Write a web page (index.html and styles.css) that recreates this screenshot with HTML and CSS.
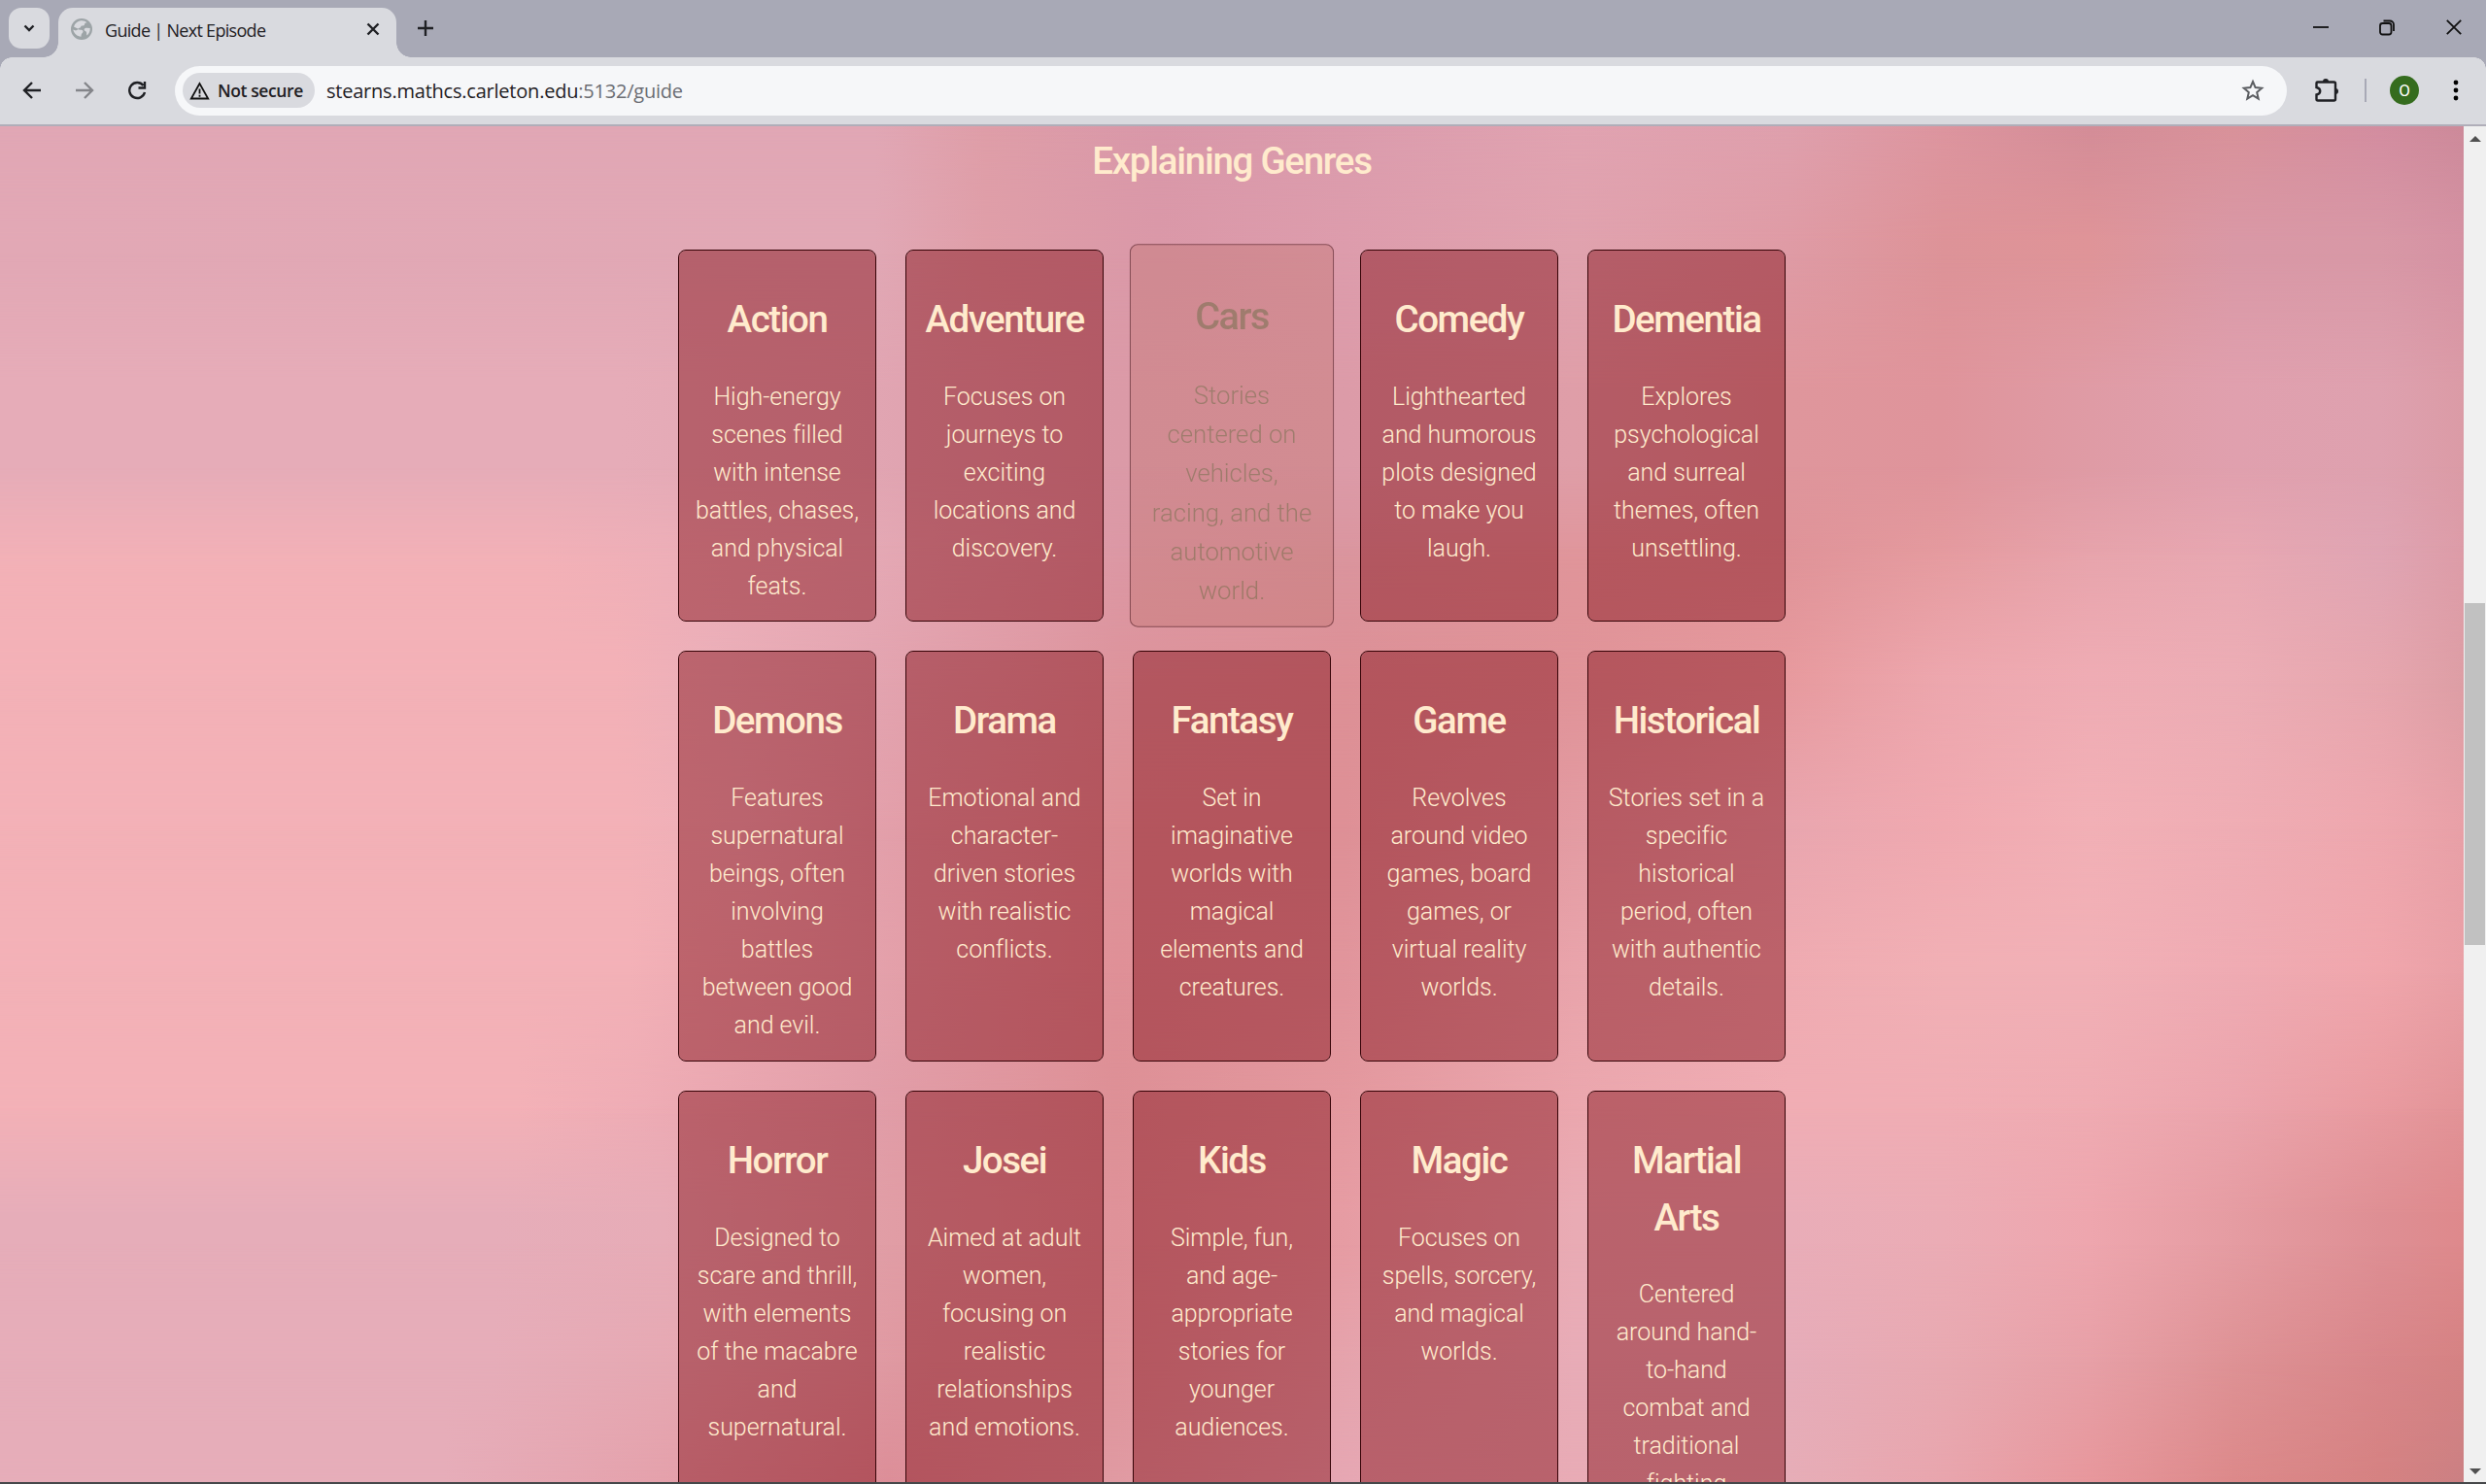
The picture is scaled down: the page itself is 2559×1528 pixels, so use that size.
FILE: index.html
```html
<!DOCTYPE html>
<html lang="en"><head><meta charset="utf-8"><title>Guide | Next Episode</title><link rel="stylesheet" href="styles.css"></head>
<body>
<header class="tabs">
<button class="tabsearch"><svg width="14" height="14" viewBox="0 0 14 14"><path d="M2.500 4.500 7 9l4.500-4.500" class="ln"/></svg></button>
<div class="tab"><svg width="22" height="22" viewBox="0 0 22 22"><circle cx="11" cy="11" r="11" fill="#9da4a7"/><path d="M10 2.300c2.500-.4 5 .4 6.500 2-1.500 0-2.500.7-2.500 2 0 1.200-1.500 1.200-2.500 1.200-1.500 0-1 1.500-2 2-.8.500-2 .2-2 1.200 0 1.300 3.500.6 4.500 1.500 1.200 1 .2 2.300-.5 3-.8.800-1 1.800-1 3.500-4-.3-7.500-3-8.200-7.200L5 12.500 8 11 3 8.500C4 5 7 2.700 10 2.300zM19.700 10c.2 3-1 5.800-3.200 7.500-.6-1-.2-2-.5-3.200-.3-1.500-1.800-1-2.300-2.300-.4-1.500 1-2.500 2.500-2.200z" fill="#d9dadf"/></svg><span class="title">Guide | Next Episode</span><svg class="x" width="14" height="14" viewBox="0 0 14 14"><path d="m1.500 1.500 11 11m0-11-11 11" class="ln"/></svg></div>
<svg class="plus" width="18" height="18" viewBox="0 0 18 18"><path d="M9 1v16M1 9h16" class="ln"/></svg>
<div class="win"><svg width="16" height="16" viewBox="0 0 16 16"><path d="M0 8h16" class="wn"/></svg><svg width="17" height="17" viewBox="0 0 17 17"><rect x="1" y="4" width="11.500" height="11.500" rx="2.500" class="wn"/><path d="M4.500 1.500H11a4 4 0 0 1 4 4V12" class="wn"/></svg><svg width="16" height="16" viewBox="0 0 16 16"><path d="m.8.8 14.400 14.400m0-14.400L.8 15.200" class="wn"/></svg></div>
</header>
<nav class="bar">
<svg class="back" width="20" height="20" viewBox="0 0 20 20"><path d="M19 10H2m8-8-8 8 8 8" class="ln"/></svg>
<svg class="fwd" width="20" height="20" viewBox="0 0 20 20"><path d="M1 10h17m-8-8 8 8-8 8" class="ln"/></svg>
<svg class="reload" width="20" height="20" viewBox="0 0 20 20"><path d="M16.500 5A8 8 0 1 0 18 12M18 1v6.500h-6.500" class="ln"/></svg>
<div class="omni"><span class="chip"><svg width="21" height="19" viewBox="0 0 21 19"><path d="M10.500 2 1.800 17.500h17.400zM10.500 7.500v5m0 1.300v2" class="wn"/></svg>Not secure</span><span class="url">stearns.mathcs.carleton.edu<i>:5132/guide</i></span>
<svg class="star" width="24" height="24" viewBox="0 0 24 24"><path d="m12 3 2.600 6.100 6.600.6-5 4.400 1.500 6.500L12 17.100l-5.700 3.500 1.500-6.500-5-4.400 6.600-.6z"/></svg></div>
<svg class="ext" width="26" height="26" viewBox="0 0 26 26"><path d="M2.500 5.500a1 1 0 0 1 1-1H20.500a1.500 1.500 0 0 1 1.500 1.500V22a1.500 1.500 0 0 1-1.500 1.500H4A1.500 1.500 0 0 1 2.500 22v-4.500c5-1 5-6.500 0-7.500z" class="ln"/><path d="M9 4a3 3 0 0 1 6 0zM22 11a3 3 0 0 1 0 6z"/></svg>
<span class="div"></span><span class="avatar">O</span>
<svg class="dots" width="6" height="22" viewBox="0 0 6 22"><circle cx="3" cy="3" r="2.400"/><circle cx="3" cy="11" r="2.400"/><circle cx="3" cy="19" r="2.400"/></svg>
</nav>
<div class="view">
<div class="backdrop"><i class="b0"></i><i class="b1"></i><i class="b2"></i><i class="b3"></i><i class="b4"></i><i class="b5"></i><i class="b6"></i><i class="b7"></i><i class="b8"></i><i class="b9"></i><i class="b10"></i></div>
<main>
<h1>Explaining Genres</h1>
<section class="grid">
<article><h2>Action</h2><p>High-energy<br>scenes filled<br>with intense<br>battles, chases,<br>and physical<br>feats.</p></article>
<article><h2>Adventure</h2><p>Focuses on<br>journeys to<br>exciting<br>locations and<br>discovery.</p></article>
<article class="hover"><h2>Cars</h2><p>Stories<br>centered on<br>vehicles,<br>racing, and the<br>automotive<br>world.</p></article>
<article><h2>Comedy</h2><p>Lighthearted<br>and humorous<br>plots designed<br>to make you<br>laugh.</p></article>
<article><h2>Dementia</h2><p>Explores<br>psychological<br>and surreal<br>themes, often<br>unsettling.</p></article>
<article><h2>Demons</h2><p>Features<br>supernatural<br>beings, often<br>involving<br>battles<br>between good<br>and evil.</p></article>
<article><h2>Drama</h2><p>Emotional and<br>character-<br>driven stories<br>with realistic<br>conflicts.</p></article>
<article><h2>Fantasy</h2><p>Set in<br>imaginative<br>worlds with<br>magical<br>elements and<br>creatures.</p></article>
<article><h2>Game</h2><p>Revolves<br>around video<br>games, board<br>games, or<br>virtual reality<br>worlds.</p></article>
<article><h2>Historical</h2><p>Stories set in a<br>specific<br>historical<br>period, often<br>with authentic<br>details.</p></article>
<article><h2>Horror</h2><p>Designed to<br>scare and thrill,<br>with elements<br>of the macabre<br>and<br>supernatural.</p></article>
<article><h2>Josei</h2><p>Aimed at adult<br>women,<br>focusing on<br>realistic<br>relationships<br>and emotions.</p></article>
<article><h2>Kids</h2><p>Simple, fun,<br>and age-<br>appropriate<br>stories for<br>younger<br>audiences.</p></article>
<article><h2>Magic</h2><p>Focuses on<br>spells, sorcery,<br>and magical<br>worlds.</p></article>
<article><h2>Martial<br>Arts</h2><p>Centered<br>around hand-<br>to-hand<br>combat and<br>traditional<br>fighting</p></article>
</section>
</main>
<aside class="scroll"><span class="up"></span><span class="thumb"></span><span class="down"></span></aside>
</div>
<footer></footer>
</body></html>
```
FILE: styles.css
```css
*{box-sizing:border-box}
body{margin:0;width:2559px;height:1528px;overflow:hidden;display:flex;flex-direction:column;background:#d9dadf;font-family:"Open Sans","Noto Sans",sans-serif;color:#1f2024}
svg{display:block;flex:none}
.ln{fill:none;stroke:#1f2024;stroke-width:2.4}
.wn{fill:none;stroke:#111;stroke-width:1.8}
.tabs{height:59px;flex:none;background:#a8a9b6;display:flex;align-items:flex-start;padding-left:9px}
.tabsearch{width:42px;height:42px;margin-top:8px;border:0;border-radius:13px;background:#d9dadf;display:grid;place-items:center;padding:0}
.tab{position:relative;width:348px;height:51px;margin:8px 0 0 9px;border-radius:15px 15px 0 0;background:#d9dadf;display:flex;align-items:center;padding:0 17px 8px 13px}
.tab::before,.tab::after{content:"";position:absolute;bottom:0;width:15px;height:15px}
.tab::before{left:-15px;background:radial-gradient(circle at 0 0,transparent 14.500px,#d9dadf 15px)}
.tab::after{right:-15px;background:radial-gradient(circle at 100% 0,transparent 14.500px,#d9dadf 15px)}
.title{font-size:18px;letter-spacing:-.7px;margin-left:13px;flex:1;padding-top:2px}
.plus{margin:20px 0 0 21px}
.win{margin-left:auto;display:flex;gap:52px;padding:20px 25px 0 0}
.bar{height:69px;flex:none;display:flex;align-items:center;padding:0 28px 1px 23px;position:relative;background:#d9dadf}
.bar::before{content:"";position:absolute;inset:0 0 auto;height:12px;background:radial-gradient(circle at 12px 12px,transparent 11.500px,#a8a9b6 12px) 0 0/12px 12px no-repeat,radial-gradient(circle at 0 12px,transparent 11.500px,#a8a9b6 12px) 100% 0/12px 12px no-repeat}
.fwd{margin-left:34px;opacity:.45}.reload{margin-left:34px}
.omni{flex:1;height:51px;border-radius:26px;background:#f6f7f9;margin-left:29px;display:flex;align-items:center;padding:0 23px 0 8px}
.chip{height:36px;width:136px;border-radius:18px;background:#d9dadf;display:flex;align-items:center;gap:8px;padding-left:7px;font-size:17.500px;font-weight:600;letter-spacing:-.4px;white-space:nowrap}
.url{font-size:20px;margin-left:12px;flex:1;letter-spacing:-.22px}.url i{font-style:normal;color:#6b6d73}
.star{fill:none;stroke:#5b5d61;stroke-width:2}
.ext{margin-left:28px;fill:#1f2024}.div{width:2px;height:24px;background:#a8a9b6;margin-left:26px}
.avatar{width:30px;height:30px;border-radius:50%;background:#356c1e;color:#fff;display:grid;place-items:center;font:17px Roboto,sans-serif;margin-left:24px}
.dots{margin-left:35px}
.view{height:1398px;flex:none;display:grid;grid-template-columns:2536px 23px;border-top:2px solid #b0aeb9;overflow:hidden}
.backdrop{grid-area:1/1;display:grid;height:1396px;isolation:isolate}
.backdrop i{grid-area:1/1}
.b0{background:linear-gradient(90deg,#e1a7b5,#e1a7b5 35.500%,#df9ea8 40%,#d998a9 47%,#db9cad 54.600%,#e1a3b1 63.900%,#dfa0ad 72.600%,#dd959f 78.900%,#d48d98 84.800%,#d9929a 90.700%,#d38da0 96.600%,#cd8a9a)}
.b1{background:linear-gradient(90deg,#e2a8b5,#e1a8b5 35.500%,#df9ea8 40%,#da98a8 47%,#dd9cac 54.600%,#e0a2ae 63.900%,#df9ba5 72.600%,#dd9398 78.900%,#df9498 84.800%,#d998a6 90.700%,#d898a6 96.600%,#d592a3);-webkit-mask:linear-gradient(transparent,#000 120px)}
.b2{background:linear-gradient(90deg,#e6acb8,#e6acb8 25.200%,#e1a5b2 35.500%,#db9aa7 45.300%,#dc9ba8 54.600%,#df9ea8 63.900%,#df969c 72.600%,#df949b 78.900%,#df9ba5 84.800%,#e0a0ae 90.700%,#dea1af 96.600%,#db9ba6);-webkit-mask:linear-gradient(transparent 130px,#000 270px)}
.b3{background:linear-gradient(90deg,#f3b1b7,#f3b1b7 22%,#eeafb8 27%,#e5a9b5 35.500%,#dc98a5 45.300%,#da959e 54.600%,#e0959a 63.900%,#df9398 72.600%,#e59b9f 78.900%,#e7a4ac 84.800%,#e8a8b2 90.700%,#dfa5b4 96.600%,#dd9ca8);-webkit-mask:linear-gradient(transparent 350px,#000 450px)}
.b4{background:linear-gradient(90deg,#f3b1b7,#f3b1b7 25%,#ebafb9 29%,#e3a4b0 35.500%,#dd949c 45.300%,#dd9096 54.600%,#e09398 63.900%,#e79a9e 72.600%,#eda7ae 78.900%,#efacb4 84.800%,#ecadb5 90.700%,#e6a6ae 96.600%,#dd9ea5);-webkit-mask:linear-gradient(transparent 430px,#000 570px)}
.b5{background:linear-gradient(90deg,#f3b1b7,#f3b1b7 25.500%,#ecafb9 30%,#e3a0ab 35.500%,#de9197 45.300%,#de9096 54.600%,#e39ba2 63.900%,#e9a6af 72.600%,#f0a9b0 78.900%,#f2b0b6 84.800%,#efadb4 90.700%,#eea7ae 96.600%,#e8a0a7);-webkit-mask:linear-gradient(transparent 570px,#000 720px)}
.b6{background:linear-gradient(90deg,#f3b1b7,#f3b1b7 25.500%,#e4a1ab 35.500%,#df9097 45.300%,#e1959c 54.600%,#e9a4ab 63.900%,#efabb1 72.600%,#f1b0b5 78.900%,#f1b0b6 84.800%,#efabb3 90.700%,#f0a6ac 96.600%,#e9a0a6);-webkit-mask:linear-gradient(transparent 720px,#000 870px)}
.b7{background:linear-gradient(90deg,#f3b1b7,#f3b1b7 21%,#eeacb5 26%,#e19da8 35.500%,#dd9096 45.300%,#e4999f 54.600%,#eba7ae 63.900%,#f0adb4 72.600%,#f0adb4 78.900%,#efabb2 84.800%,#eba4ac 90.700%,#e89a9f 96.600%,#e29397);-webkit-mask:linear-gradient(transparent 870px,#000 1020px)}
.b8{background:linear-gradient(90deg,#e6adb9,#e6adb9 20%,#e7acb7 27%,#e19ea6 35.500%,#df9299 45.300%,#e69ca3 54.600%,#e9abb4 63.900%,#e9adb8 72.600%,#ebacb5 78.900%,#eea6ae 84.800%,#e59ca2 90.700%,#de8f94 96.600%,#de898c);-webkit-mask:linear-gradient(transparent 1010px,#000 1120px)}
.b9{background:linear-gradient(90deg,#e6adb9,#e6adb9 20%,#e6a8b2 28%,#de969e 38%,#df949b 45.300%,#e5a3ac 54.600%,#e8acb7 63.900%,#e6acb9 72.600%,#e8a9b1 78.900%,#e7a0a7 84.800%,#de9295 90.700%,#d8868a 96.600%,#d58283);-webkit-mask:linear-gradient(transparent 1150px,#000 1270px)}
.b10{background:linear-gradient(90deg,#e6adb9,#e6adb9 18%,#e4a0aa 27.600%,#dc8e98 36%,#e09aa2 45.300%,#e6a7b3 54.600%,#e8abb5 63.900%,#e6adb7 72.600%,#e8a5ad 78.900%,#e7979c 84.800%,#dc898a 90.700%,#d58282 96.600%,#cb8083);-webkit-mask:linear-gradient(transparent 1270px,#000 1396px)}
main{grid-area:1/1;position:relative;z-index:1;height:1396px;overflow:hidden;font-family:Roboto,"Liberation Sans",sans-serif;color:#ffebcd;text-align:center;line-height:1.5}
h1{margin:6px 0 62px;font-size:38.500px;line-height:59px;font-weight:500;letter-spacing:-1.280px}
.grid{display:grid;grid-template-columns:repeat(5,204px);grid-template-rows:383px 423px 540px;gap:30px;justify-content:center}
article{border:1px solid #350307;border-radius:8px;background:rgba(138,26,36,.5);background-clip:padding-box;padding-top:42px}
.hover{opacity:.5;transform:scale(1.03);background:rgba(195,118,115,.8);color:#645f34;border-width:1.500px}
h2{margin:0;font-size:38.500px;line-height:58.500px;font-weight:500;letter-spacing:-1.450px}
p{margin:30px 0 0;font-size:25px;line-height:39px;font-weight:350;letter-spacing:-.04px;white-space:nowrap}
.scroll{grid-area:1/2;background:#f0f0f0;display:flex;flex-direction:column;align-items:center;padding:10px 0 8px}
.up,.down{border:6px solid transparent;border-top:0;border-bottom:6px solid #505050}
.down{margin-top:auto;border-bottom:0;border-top:6px solid #505050}
.thumb{width:21px;height:352px;background:#c1c1c1;margin-top:475px}
footer{height:2px;background:#46484a}
```
